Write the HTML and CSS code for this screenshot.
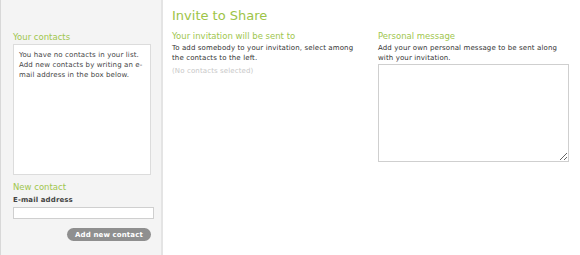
FILE: index.html
```html
<!DOCTYPE html>
<html>
<head>
<meta charset="utf-8">
<link rel="stylesheet" href="styles.css">
</head>
<body>
<div class="page">
  <aside class="sidebar">
    <h3 class="section-title contacts-title">Your contacts</h3>
    <div class="contacts-box">You have no contacts in your list. Add new contacts by writing an e-mail address in the box below.</div>
    <h3 class="section-title new-title">New contact</h3>
    <label class="field-label">E-mail address</label>
    <input class="email-input" type="text">
    <div class="btn-row"><button class="btn">Add new contact</button></div>
  </aside>
  <main class="main">
    <h1 class="title">Invite to Share</h1>
    <div class="columns">
      <section class="col col-left">
        <h3 class="section-title">Your invitation will be sent to</h3>
        <p class="desc">To add somebody to your invitation, select among the contacts to the left.</p>
        <p class="empty">(No contacts selected)</p>
      </section>
      <section class="col col-right">
        <h3 class="section-title">Personal message</h3>
        <p class="desc">Add your own personal message to be sent along with your invitation.</p>
        <textarea class="message"></textarea>
      </section>
    </div>
  </main>
</div>
</body>
</html>
```
FILE: styles.css
```css
html, body {
  margin: 0;
  padding: 0;
  background: #fff;
}
body {
  font-family: "DejaVu Sans", Verdana, sans-serif;
  font-size: 7px;
  letter-spacing: 0.12px;
  color: #333;
}
.page {
  display: flex;
  height: 255px;
}
.sidebar {
  width: 163px;
  box-sizing: border-box;
  background: #f4f4f4;
  border-left: 1px solid #d8d8d8;
  border-right: 2px solid #e4e4e4;
  padding: 32px 0 0 12px;
  display: flex;
  flex-direction: column;
}
.section-title {
  margin: 0;
  font-size: 8.5px;
  font-weight: normal;
  letter-spacing: 0;
  color: #a0c64e;
  line-height: 11px;
}
.contacts-title {
  margin-bottom: 1px;
}
.contacts-box {
  width: 138px;
  height: 131px;
  box-sizing: border-box;
  background: #fff;
  border: 1px solid #dcdcdc;
  padding: 5px 5px;
  line-height: 10px;
  color: #444;
}
.new-title {
  margin-top: 7px;
}
.field-label {
  font-weight: bold;
  line-height: 14px;
  color: #444;
}
.email-input {
  width: 141px;
  height: 12px;
  box-sizing: border-box;
  margin: 0;
  border: 1px solid #cfcfcf;
  background: #fff;
  padding: 0;
}
.btn-row {
  display: flex;
  justify-content: flex-end;
  width: 138px;
  margin-top: 9px;
}
.btn {
  width: 84px;
  height: 13px;
  border: none;
  border-radius: 7px;
  background: #8f8f8f;
  color: #fff;
  font-family: "DejaVu Sans", Verdana, sans-serif;
  font-size: 7px;
  letter-spacing: 0.12px;
  font-weight: bold;
  padding: 0;
}
.main {
  flex: 1;
  padding: 8px 0 0 9px;
}
.title {
  margin: 0;
  font-size: 13px;
  font-weight: normal;
  letter-spacing: 0;
  color: #9dc447;
  line-height: 16px;
}
.columns {
  display: flex;
  margin-top: 7px;
}
.col-left {
  width: 206px;
}
.col-right {
  width: 191px;
}
.col-left .desc {
  width: 184px;
}
.col-right .desc {
  width: 180px;
}
.desc {
  margin: 1px 0 0;
  line-height: 10px;
  color: #333;
}
.empty {
  margin: 3px 0 0;
  line-height: 10px;
  color: #c8c8c8;
}
.message {
  display: block;
  margin: 1px 0 0;
  width: 191px;
  height: 98px;
  box-sizing: border-box;
  border: 1px solid #cfcfcf;
  resize: both;
}
```
